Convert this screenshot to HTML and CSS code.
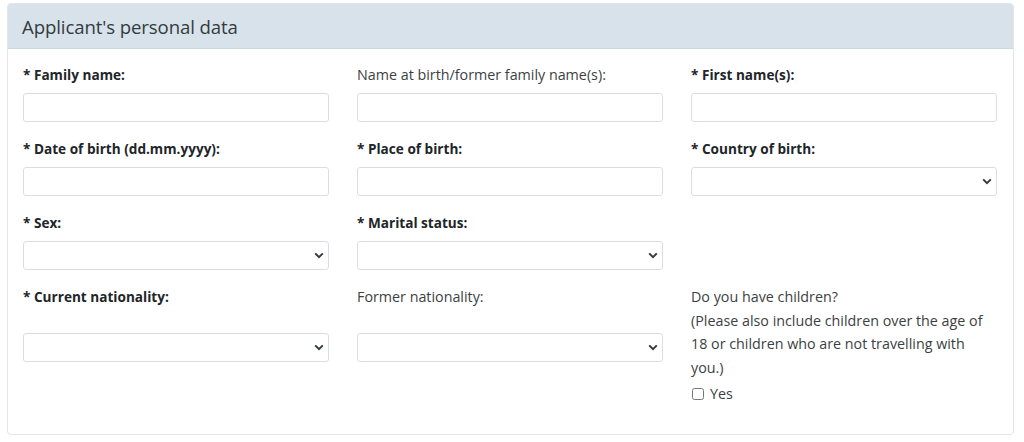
FILE: index.html
```html
<!DOCTYPE html>
<html lang="en">
<head>
<meta charset="utf-8">
<title>Applicant's personal data</title>
<link rel="stylesheet" href="styles.css">
</head>
<body>
<section class="card">
  <header class="card-header"><h2>Applicant's personal data</h2></header>
  <div class="card-body">
    <div class="grid">
      <div class="group">
        <label class="lbl req">* Family name:</label>
        <input class="ctl" type="text">
      </div>
      <div class="group">
        <label class="lbl">Name at birth/former family name(s):</label>
        <input class="ctl" type="text">
      </div>
      <div class="group">
        <label class="lbl req">* First name(s):</label>
        <input class="ctl" type="text">
      </div>

      <div class="group">
        <label class="lbl req">* Date of birth (dd.mm.yyyy):</label>
        <input class="ctl" type="text">
      </div>
      <div class="group">
        <label class="lbl req">* Place of birth:</label>
        <input class="ctl" type="text">
      </div>
      <div class="group">
        <label class="lbl req">* Country of birth:</label>
        <div class="sel"><select class="ctl"><option></option></select><svg class="chev" viewBox="0 0 10 7"><path d="M1.2 1.4 5 5.2 8.8 1.4" fill="none" stroke="#343a40" stroke-width="2"/></svg></div>
      </div>

      <div class="group">
        <label class="lbl req">* Sex:</label>
        <div class="sel"><select class="ctl"><option></option></select><svg class="chev" viewBox="0 0 10 7"><path d="M1.2 1.4 5 5.2 8.8 1.4" fill="none" stroke="#343a40" stroke-width="2"/></svg></div>
      </div>
      <div class="group">
        <label class="lbl req">* Marital status:</label>
        <div class="sel"><select class="ctl"><option></option></select><svg class="chev" viewBox="0 0 10 7"><path d="M1.2 1.4 5 5.2 8.8 1.4" fill="none" stroke="#343a40" stroke-width="2"/></svg></div>
      </div>
      <div class="group"></div>

      <div class="group">
        <label class="lbl req tall">* Current nationality:</label>
        <div class="sel"><select class="ctl"><option></option></select><svg class="chev" viewBox="0 0 10 7"><path d="M1.2 1.4 5 5.2 8.8 1.4" fill="none" stroke="#343a40" stroke-width="2"/></svg></div>
      </div>
      <div class="group">
        <label class="lbl tall">Former nationality:</label>
        <div class="sel"><select class="ctl"><option></option></select><svg class="chev" viewBox="0 0 10 7"><path d="M1.2 1.4 5 5.2 8.8 1.4" fill="none" stroke="#343a40" stroke-width="2"/></svg></div>
      </div>
      <div class="group last">
        <p class="note">Do you have children?<br>(Please also include children over the age of 18 or children who are not travelling with you.)</p>
        <label class="check"><input type="checkbox"> Yes</label>
      </div>
    </div>
  </div>
</section>
</body>
</html>
```
FILE: styles.css
```css
html, body {
  margin: 0;
  padding: 0;
  background: #ffffff;
}
body {
  padding: 3px 10px 0 7px;
  font-family: "Open Sans", "Noto Sans", sans-serif;
  font-size: 14.3px;
  color: #212529;
}
.card {
  border: 1px solid #e1e4e8;
  border-radius: 4px;
  background: #fff;
  overflow: hidden;
}
.card-header {
  background: #d7e2ea;
  height: 44px;
  display: flex;
  align-items: center;
  padding: 0 14px;
  border-bottom: 1px solid #ccd8e0;
}
.card-header h2 {
  margin: 0;
  font-weight: 400;
  font-size: 18.6px;
  color: #343a40;
  letter-spacing: -0.1px;
}
.card-body {
  padding: 14px 16px 30px 15px;
}
.grid {
  display: grid;
  grid-template-columns: 306px 306px 306px;
  column-gap: 28px;
}
.group {
  margin-bottom: 15px;
}
.lbl {
  display: block;
  line-height: 23px;
  height: 23px;
  margin-bottom: 7px;
  color: #3b3f44;
}
.lbl.req {
  font-weight: 700;
  font-size: 13.6px;
  color: #212529;
}
.lbl.tall {
  height: 41px;
}
.ctl {
  display: block;
  box-sizing: border-box;
  width: 100%;
  height: 29px;
  border: 1px solid #dadee3;
  border-radius: 3px;
  background: #fff;
  font: inherit;
  margin: 0;
  padding: 0 8px;
  appearance: none;
  -webkit-appearance: none;
}
.sel {
  position: relative;
}
.chev {
  position: absolute;
  right: 5px;
  top: 11px;
  width: 10px;
  height: 7px;
}
.note {
  margin: 0;
  line-height: 23.5px;
  color: #3b3f44;
}
.check {
  display: flex;
  align-items: center;
  gap: 6px;
  margin-top: 5px;
  line-height: 20px;
  color: #3b3f44;
}
.check input {
  margin: 0 0 0 1px;
  width: 12px;
  height: 12px;
}
.group.last {
  margin-bottom: 0;
}
```
